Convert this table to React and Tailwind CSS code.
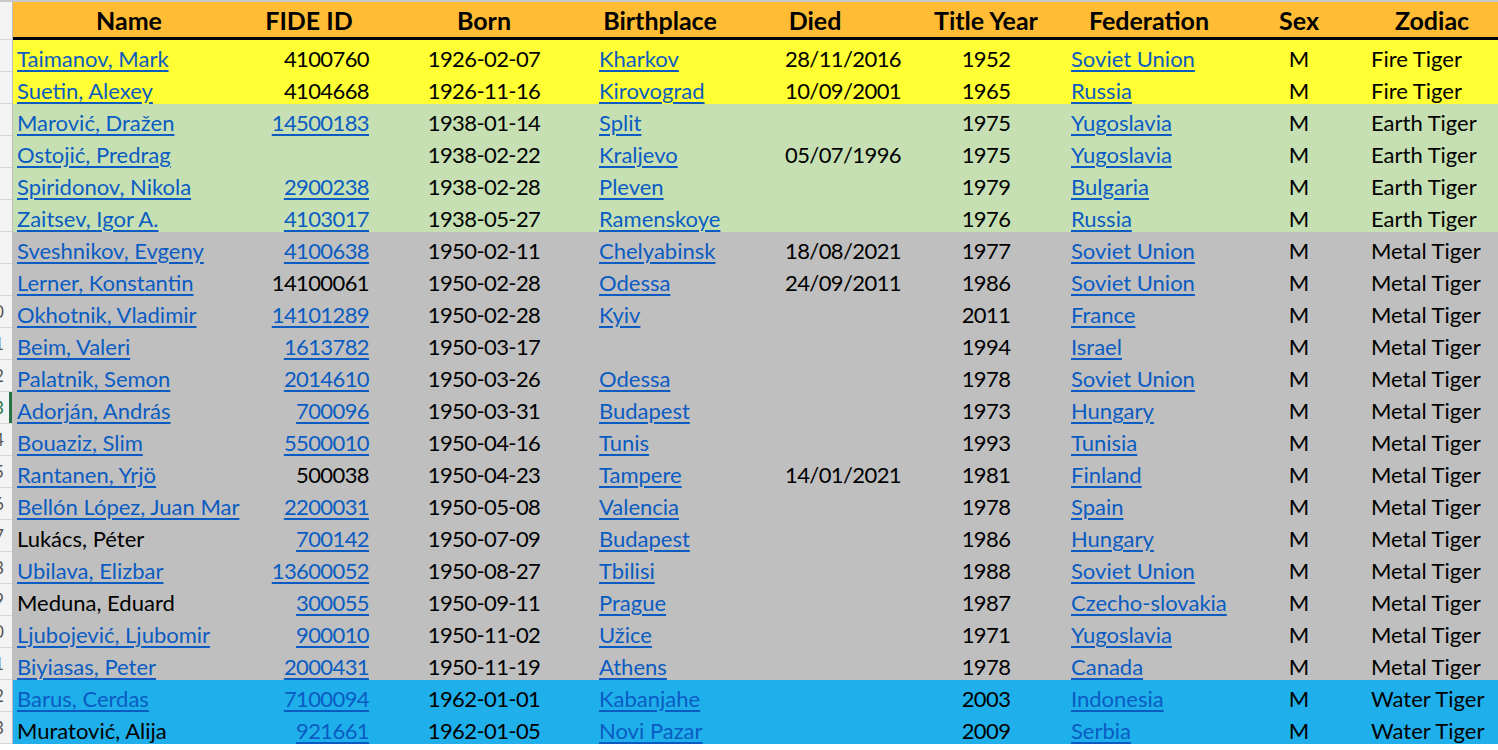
import React from "react";

// column widths follow the sheet: Name, FIDE ID, Born, Birthplace, Died, Title Year, Federation, Sex, Zodiac
const cols = "grid-cols-[232px_128px_222px_130px_180px_162px_164px_136px_130px]";

const YEL = "bg-[#ffff33]";
const GRN = "bg-[#c6e0b4]";
const GRY = "bg-[#bfbfbf]";
const BLU = "bg-[#1fb0ec]";

const rows = [
  ["Taimanov, Mark", true, "4100760", false, "1926-02-07", "Kharkov", "28/11/2016", "1952", "Soviet Union", "Fire Tiger", YEL],
  ["Suetin, Alexey", true, "4104668", false, "1926-11-16", "Kirovograd", "10/09/2001", "1965", "Russia", "Fire Tiger", YEL],
  ["Marović, Dražen", true, "14500183", true, "1938-01-14", "Split", "", "1975", "Yugoslavia", "Earth Tiger", GRN],
  ["Ostojić, Predrag", true, "", false, "1938-02-22", "Kraljevo", "05/07/1996", "1975", "Yugoslavia", "Earth Tiger", GRN],
  ["Spiridonov, Nikola", true, "2900238", true, "1938-02-28", "Pleven", "", "1979", "Bulgaria", "Earth Tiger", GRN],
  ["Zaitsev, Igor A.", true, "4103017", true, "1938-05-27", "Ramenskoye", "", "1976", "Russia", "Earth Tiger", GRN],
  ["Sveshnikov, Evgeny", true, "4100638", true, "1950-02-11", "Chelyabinsk", "18/08/2021", "1977", "Soviet Union", "Metal Tiger", GRY],
  ["Lerner, Konstantin", true, "14100061", false, "1950-02-28", "Odessa", "24/09/2011", "1986", "Soviet Union", "Metal Tiger", GRY],
  ["Okhotnik, Vladimir", true, "14101289", true, "1950-02-28", "Kyiv", "", "2011", "France", "Metal Tiger", GRY],
  ["Beim, Valeri", true, "1613782", true, "1950-03-17", "", "", "1994", "Israel", "Metal Tiger", GRY],
  ["Palatnik, Semon", true, "2014610", true, "1950-03-26", "Odessa", "", "1978", "Soviet Union", "Metal Tiger", GRY],
  ["Adorján, András", true, "700096", true, "1950-03-31", "Budapest", "", "1973", "Hungary", "Metal Tiger", GRY],
  ["Bouaziz, Slim", true, "5500010", true, "1950-04-16", "Tunis", "", "1993", "Tunisia", "Metal Tiger", GRY],
  ["Rantanen, Yrjö", true, "500038", false, "1950-04-23", "Tampere", "14/01/2021", "1981", "Finland", "Metal Tiger", GRY],
  ["Bellón López, Juan Mar", true, "2200031", true, "1950-05-08", "Valencia", "", "1978", "Spain", "Metal Tiger", GRY],
  ["Lukács, Péter", false, "700142", true, "1950-07-09", "Budapest", "", "1986", "Hungary", "Metal Tiger", GRY],
  ["Ubilava, Elizbar", true, "13600052", true, "1950-08-27", "Tbilisi", "", "1988", "Soviet Union", "Metal Tiger", GRY],
  ["Meduna, Eduard", false, "300055", true, "1950-09-11", "Prague", "", "1987", "Czecho-slovakia", "Metal Tiger", GRY],
  ["Ljubojević, Ljubomir", true, "900010", true, "1950-11-02", "Užice", "", "1971", "Yugoslavia", "Metal Tiger", GRY],
  ["Biyiasas, Peter", true, "2000431", true, "1950-11-19", "Athens", "", "1978", "Canada", "Metal Tiger", GRY],
  ["Barus, Cerdas", true, "7100094", true, "1962-01-01", "Kabanjahe", "", "2003", "Indonesia", "Water Tiger", BLU],
  ["Muratović, Alija", false, "921661", true, "1962-01-05", "Novi Pazar", "", "2009", "Serbia", "Water Tiger", BLU],
];

const link = "text-[#0b5cc2] underline decoration-[1.5px] underline-offset-[3px]";

const Cell = ({ className = "", children }) => (
  <div className={`h-8 pt-1 flex items-center overflow-hidden whitespace-nowrap px-1 ${className}`}>
    {children}
  </div>
);

export default function App() {
  return (
    <div
      className="w-[1498px] h-[750px] overflow-hidden bg-white text-black"
      style={{ fontFamily: "Lato, 'Open Sans', sans-serif" }}
    >
      <div className="h-[2px] bg-[#c8c8c8]" />
      <div className="flex">
        {/* row headers, scrolled mostly out of view */}
        <div className="w-[13px] shrink-0 overflow-hidden bg-[#f3f3f3] border-r border-[#bdbdbd]">
          <div className="h-[38px] border-b border-[#d6d6d6]" />
          {rows.map((r, i) => (
            <div
              key={i}
              className={`h-8 relative border-b border-[#d6d6d6] ${i === 11 ? "text-[#217346]" : "text-[#555]"}`}
            >
              <div className="absolute top-0 h-full w-[60px] left-[-36px] flex items-center justify-center text-[17px]">
                {i + 2}
              </div>
              {i === 11 && <div className="absolute right-0 top-0 h-full w-[3px] bg-[#217346]" />}
            </div>
          ))}
        </div>

        <div className="flex-1">
          <div className={`grid ${cols} h-[38px] bg-[#ffbc34] border-b-[3px] border-black text-[25px] font-bold`}>
            <div className="flex items-center justify-center">Name</div>
            <div className="flex items-center justify-center">FIDE ID</div>
            <div className="flex items-center justify-center">Born</div>
            <div className="flex items-center justify-center">Birthplace</div>
            <div className="flex items-center justify-center">Died</div>
            <div className="flex items-center justify-center">Title Year</div>
            <div className="flex items-center justify-center">Federation</div>
            <div className="flex items-center justify-center">Sex</div>
            <div className="flex items-center justify-center">Zodiac</div>
          </div>

          {rows.map(([name, nameLink, fide, fideLink, born, place, died, year, fed, zodiac, bg], i) => (
            <div key={i} className={`grid ${cols} ${bg} text-[22px]`}>
              <Cell><span className={nameLink ? link : ""}>{name}</span></Cell>
              <Cell className="justify-end tracking-[-0.6px]"><span className={fideLink ? link : ""}>{fide}</span></Cell>
              <Cell className="justify-center tracking-[-0.6px]">{born}</Cell>
              <Cell><span className={link}>{place}</span></Cell>
              <Cell className="justify-end tracking-[-0.6px]">{died}</Cell>
              <Cell className="justify-center tracking-[-0.6px]">{year}</Cell>
              <Cell><span className={link}>{fed}</span></Cell>
              <Cell className="justify-center">M</Cell>
              <Cell>{zodiac}</Cell>
            </div>
          ))}
        </div>
      </div>
    </div>
  );
}
